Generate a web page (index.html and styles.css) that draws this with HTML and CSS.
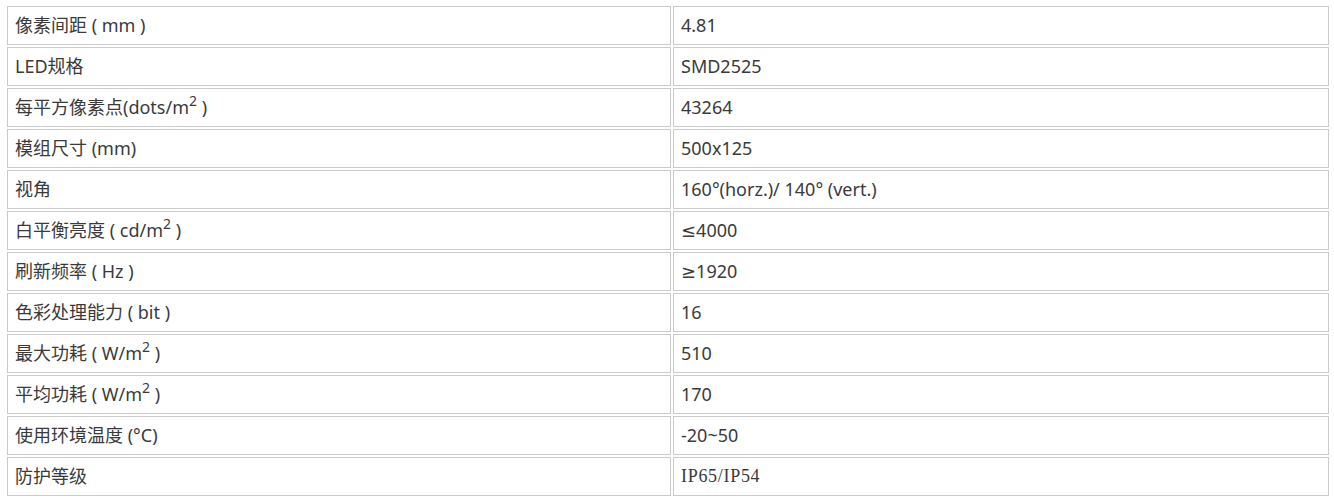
FILE: index.html
```html
<!DOCTYPE html>
<html lang="zh-CN">
<head>
<meta charset="utf-8">
<title>参数</title>
<link rel="stylesheet" href="styles.css">
</head>
<body>
<table class="spec">
  <colgroup><col class="c-name"><col class="c-val"></colgroup>
  <tbody>
    <tr><td>像素间距 ( mm )</td><td>4.81</td></tr>
    <tr><td>LED规格</td><td>SMD2525</td></tr>
    <tr><td>每平方像素点(dots/m<sup>2</sup> )</td><td>43264</td></tr>
    <tr><td>模组尺寸 (mm)</td><td>500x125</td></tr>
    <tr><td>视角</td><td>160°(horz.)/ 140° (vert.)</td></tr>
    <tr><td>白平衡亮度 ( cd/m<sup>2</sup> )</td><td>≤4000</td></tr>
    <tr><td>刷新频率 ( Hz )</td><td>≥1920</td></tr>
    <tr><td>色彩处理能力 ( bit )</td><td>16</td></tr>
    <tr><td>最大功耗 ( W/m<sup>2</sup> )</td><td>510</td></tr>
    <tr><td>平均功耗 ( W/m<sup>2</sup> )</td><td>170</td></tr>
    <tr><td>使用环境温度 (°C)</td><td>-20~50</td></tr>
    <tr><td>防护等级</td><td class="serif">IP65/IP54</td></tr>
  </tbody>
</table>
</body>
</html>
```
FILE: styles.css
```css
html, body {
  margin: 0;
  padding: 0;
  background: #fff;
}
.spec {
  margin: 4px 0 0 5px;
  width: 1326px;
  table-layout: fixed;
  border-collapse: separate;
  border-spacing: 2px;
  font-family: "Noto Sans", "DejaVu Sans", "Noto Sans CJK SC", sans-serif;
  font-size: 18px;
  color: #3a3a3a;
}
.c-name { width: 664px; }
.c-val { width: 656px; }
.spec td {
  border: 1px solid #cbcbcb;
  padding: 0 7px;
  line-height: 37px;
  height: 37px;
  white-space: nowrap;
  vertical-align: middle;
}
.spec sup {
  font-size: 14px;
  line-height: 0;
  vertical-align: 8px;
}
.spec td.serif {
  font-family: "Liberation Serif", serif;
  letter-spacing: 0.7px;
}
```
